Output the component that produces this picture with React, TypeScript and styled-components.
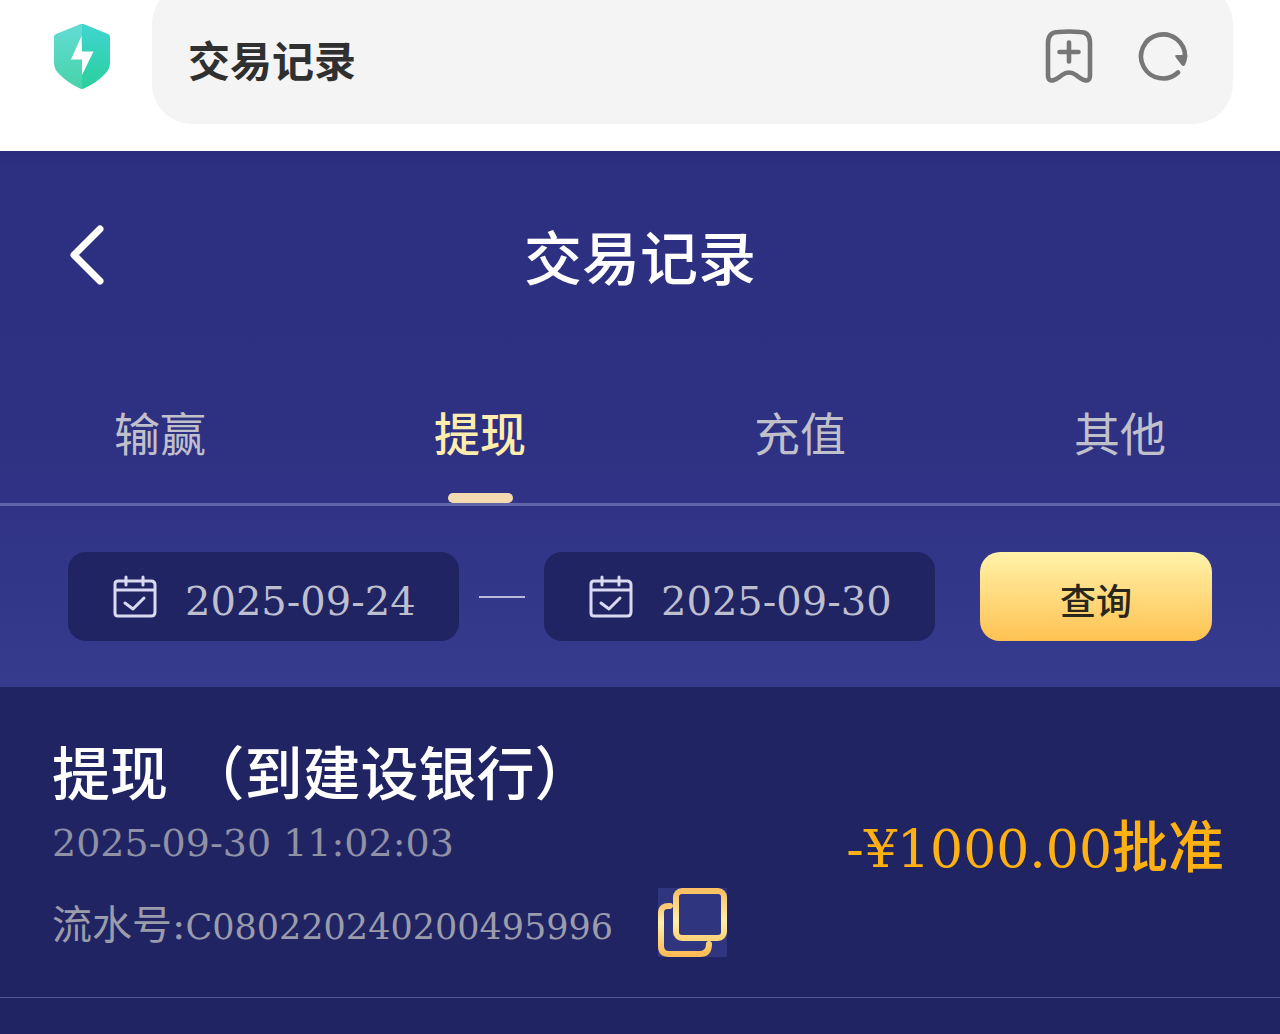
import React, { useState } from "react";
import styled, { createGlobalStyle } from "styled-components";

const serif = `"DejaVu Serif", "Noto Sans CJK SC", serif`;
const hans = `"Noto Sans CJK SC", "Noto Sans", sans-serif`;

const GlobalStyle = createGlobalStyle`
  * { box-sizing: border-box; }
  html, body { margin: 0; background: #212463; }
  body { font-family: ${hans}; }
  button, input { font: inherit; color: inherit; border: 0; padding: 0; background: none; }
  button { cursor: pointer; }
  svg { display: block; flex: none; }
  h1, h2, p { margin: 0; font-weight: 400; }
`;

const Page = styled.div`
  min-height: 100vh;
  background: #212463;
`;

const BrowserBar = styled.header`
  display: flex;
  align-items: flex-start;
  gap: 40px;
  height: 151px;
  padding: 0 47px 0 52px;
  overflow: hidden;
  background: #fff;
`;

const ShieldButton = styled.button`
  margin-top: 22px;
`;

const AddressBar = styled.div`
  display: flex;
  flex: 1;
  align-items: center;
  gap: 44px;
  min-width: 0;
  height: 140px;
  margin-top: -16px;
  padding: 4px 44px 0 36px;
  border-radius: 40px;
  background: #f4f4f4;
  color: #777;
`;

const AddressText = styled.input`
  flex: 1;
  min-width: 0;
  height: 60px;
  margin-top: 4px;
  outline: 0;
  color: #303030;
  font-size: 42px;
  font-weight: 700;
`;

const TopPanel = styled.section`
  background: linear-gradient(#2a2b7b 0, #2d2f80 16px, #2e3082 50%, #363b8d);
`;

const TitleBar = styled.div`
  display: grid;
  grid-template-columns: 64px 1fr 64px;
  align-items: center;
  height: 208px;
  padding: 0 56px;
`;

const BackButton = styled.button`
  justify-self: start;
  padding: 0 12px;
`;

const Title = styled.h1`
  color: #fff;
  font-size: 58px;
  line-height: 64px;
  font-weight: 500;
  text-align: center;
`;

const Tabs = styled.nav`
  display: grid;
  grid-template-columns: repeat(4, 1fr);
  border-bottom: 3px solid #6264a9;
`;

const Tab = styled.button<{ $active: boolean }>`
  display: flex;
  flex-direction: column;
  align-items: center;
  justify-content: flex-end;
  gap: 28px;
  height: 144px;
  color: ${(p) => (p.$active ? "#ffedad" : "#c0c0cb")};
  font-size: 46px;
  line-height: 68px;
  font-weight: ${(p) => (p.$active ? 500 : 400)};

  &::after {
    content: "";
    width: 65px;
    height: 10px;
    border-radius: 5px;
    background: ${(p) => (p.$active ? "#f4dab0" : "transparent")};
  }
`;

const Filters = styled.form`
  display: flex;
  align-items: center;
  padding: 46px 68px;
`;

const DateField = styled.label`
  display: flex;
  flex: 1;
  align-items: center;
  gap: 28px;
  min-width: 0;
  height: 89px;
  padding: 0 16px 0 45px;
  border-radius: 18px;
  background: #212463;
  color: #bdbfcf;
`;

const DateInput = styled.input`
  flex: 1;
  min-width: 0;
  height: 60px;
  margin-top: 8px;
  outline: 0;
  font-family: ${serif};
  font-size: 40px;
`;

const RangeDash = styled.span`
  width: 46px;
  height: 2px;
  margin: 0 19px 0 20px;
  background: #b9bbdc;
`;

const QueryButton = styled.button`
  width: 232px;
  height: 89px;
  margin-left: 45px;
  padding-top: 4px;
  border-radius: 20px;
  background: linear-gradient(#fff2a9, #ffc252);
  color: #29271c;
  font-size: 36px;
  font-weight: 500;
`;

const Record = styled.article`
  display: flex;
  justify-content: space-between;
  padding: 52px 56px 40px 52px;
  border-bottom: 1px solid #555891;
`;

const Details = styled.div`
  display: flex;
  flex-direction: column;
`;

const RecordTitle = styled.h2`
  color: #fff;
  font-family: ${serif};
  font-size: 58px;
  line-height: 72px;
  font-weight: 500;
`;

const Time = styled.time`
  color: #8f91a5;
  font-family: ${serif};
  font-size: 38px;
  line-height: 64px;
`;

const SerialRow = styled.div`
  display: flex;
  align-items: center;
  gap: 45px;
  height: 70px;
  margin-top: 12px;
`;

const Serial = styled.p`
  color: #9b9cab;
  font-family: ${serif};
  font-size: 35px;
  line-height: 60px;
  margin-top: 8px;
`;

const SerialLabel = styled.span`
  font-size: 40px;
`;

const Amount = styled.p`
  align-self: center;
  color: #ffb013;
  font-family: ${serif};
  font-size: 52px;
  line-height: 80px;
  white-space: nowrap;
`;

const Status = styled.span`
  font-size: 56px;
  font-weight: 500;
`;

const ShieldIcon = () => (
  <svg width="60" height="68" viewBox="0 0 60 68" aria-hidden="true">
    <defs>
      <linearGradient id="shieldLeft" x1="0" y1="0" x2="0" y2="1">
        <stop offset="0" stopColor="#62dcd6" />
        <stop offset="1" stopColor="#48d3a8" />
      </linearGradient>
      <linearGradient id="shieldRight" x1="0" y1="0" x2="0" y2="1">
        <stop offset="0" stopColor="#3fd5d0" />
        <stop offset="1" stopColor="#2bcf9d" />
      </linearGradient>
    </defs>
    <path d="M30 2C28 2 27 2.500 25 3.500L4 12Q2 13 2 15V41Q2 47 7 52Q16 61 27 66Q29 67 30 67Z" fill="url(#shieldLeft)" />
    <path d="M30 2C32 2 33 2.500 35 3.500L56 12Q58 13 58 15V41Q58 47 53 52Q44 61 33 66Q31 67 30 67Z" fill="url(#shieldRight)" />
    <path d="M29.500 14L19 37.500H30V53L41.500 29.500H30Z" fill="#fff" />
  </svg>
);

const BookmarkIcon = () => (
  <svg width="48" height="54" viewBox="0 0 48 54" fill="none" stroke="currentColor" strokeWidth="4.600" strokeLinecap="round" strokeLinejoin="round" aria-hidden="true">
    <path d="M3 14Q3 3 13 3Q24 2 35 3Q45 3 45 14V46Q45 53 39 51Q36 50 31 46Q24 41 17 46Q12 50 9 51Q3 53 3 46Z" />
    <path d="M24 13.500V32.500M14.500 23H33.500" />
  </svg>
);

const ReloadIcon = () => (
  <svg width="52" height="52" viewBox="0 0 52 52" fill="none" aria-hidden="true">
    <path d="M41 42.500A22 22 0 1 1 48 27" stroke="currentColor" strokeWidth="4.600" strokeLinecap="round" />
    <path d="M39 25H50.400Q50 31 48 35Q46.500 37 44.500 35L38.500 27Q37.500 25.500 39 25Z" fill="currentColor" />
  </svg>
);

const BackIcon = () => (
  <svg width="38" height="64" viewBox="0 0 38 64" fill="none" stroke="#fff" strokeWidth="7" strokeLinecap="round" strokeLinejoin="round" aria-hidden="true">
    <path d="M32 6L6 32L32 58" />
  </svg>
);

const CalendarIcon = () => (
  <svg width="44" height="44" viewBox="0 0 44 44" fill="none" stroke="#d9daf2" strokeWidth="3" strokeLinecap="round" strokeLinejoin="round" aria-hidden="true">
    <path d="M5 6H38Q42 6 42 10V37Q42 41 38 41H5Q2 41 2 38V9Q2 6 5 6ZM2 15H42M13 2V10M30 2V10M12 28L20 34L31 23" />
  </svg>
);

const CopyIcon = () => (
  <svg width="69" height="69" viewBox="0 0 69 69" fill="none" aria-hidden="true">
    <defs>
      <linearGradient id="copyFront" x1="0" y1="0" x2="0" y2="1">
        <stop offset="0" stopColor="#fbc164" />
        <stop offset="0.650" stopColor="#fdf0aa" />
        <stop offset="1" stopColor="#fcd47b" />
      </linearGradient>
      <linearGradient id="copyBack" x1="0" y1="0" x2="0" y2="1">
        <stop offset="0" stopColor="#fbc971" />
        <stop offset="0.350" stopColor="#fdf0aa" />
        <stop offset="1" stopColor="#fdbc56" />
      </linearGradient>
    </defs>
    <rect width="69" height="69" fill="#30357f" />
    <path d="M12 18Q3 17 3 25V58Q3 66 11 66H42Q51 66 51 56" stroke="url(#copyBack)" strokeWidth="6" strokeLinecap="round" />
    <rect x="18" y="3" width="48" height="47" rx="6" fill="#30357f" stroke="url(#copyFront)" strokeWidth="6" />
  </svg>
);

const tabs = ["输赢", "提现", "充值", "其他"];

export default function App() {
  const [active, setActive] = useState("提现");
  const [from, setFrom] = useState("2025-09-24");
  const [to, setTo] = useState("2025-09-30");

  return (
    <Page>
      <GlobalStyle />
      <BrowserBar>
        <ShieldButton type="button" aria-label="安全"><ShieldIcon /></ShieldButton>
        <AddressBar>
          <AddressText type="text" aria-label="地址栏" defaultValue="交易记录" />
          <button type="button" aria-label="收藏"><BookmarkIcon /></button>
          <button type="button" aria-label="刷新"><ReloadIcon /></button>
        </AddressBar>
      </BrowserBar>

      <TopPanel>
        <TitleBar>
          <BackButton type="button" aria-label="返回"><BackIcon /></BackButton>
          <Title>交易记录</Title>
        </TitleBar>
        <Tabs>
          {tabs.map((tab) => (
            <Tab key={tab} type="button" $active={tab === active} onClick={() => setActive(tab)}>
              {tab}
            </Tab>
          ))}
        </Tabs>
        <Filters onSubmit={(e) => e.preventDefault()}>
          <DateField>
            <CalendarIcon />
            <DateInput type="text" aria-label="开始日期" value={from} onChange={(e) => setFrom(e.target.value)} />
          </DateField>
          <RangeDash />
          <DateField>
            <CalendarIcon />
            <DateInput type="text" aria-label="结束日期" value={to} onChange={(e) => setTo(e.target.value)} />
          </DateField>
          <QueryButton type="submit">查询</QueryButton>
        </Filters>
      </TopPanel>

      <main>
        <Record>
          <Details>
            <RecordTitle>提现 （到建设银行）</RecordTitle>
            <Time dateTime="2025-09-30T11:02:03">2025-09-30 11:02:03</Time>
            <SerialRow>
              <Serial><SerialLabel>流水号:</SerialLabel>C080220240200495996</Serial>
              <button type="button" aria-label="复制"><CopyIcon /></button>
            </SerialRow>
          </Details>
          <Amount>-¥1000.00<Status>批准</Status></Amount>
        </Record>
      </main>
    </Page>
  );
}
